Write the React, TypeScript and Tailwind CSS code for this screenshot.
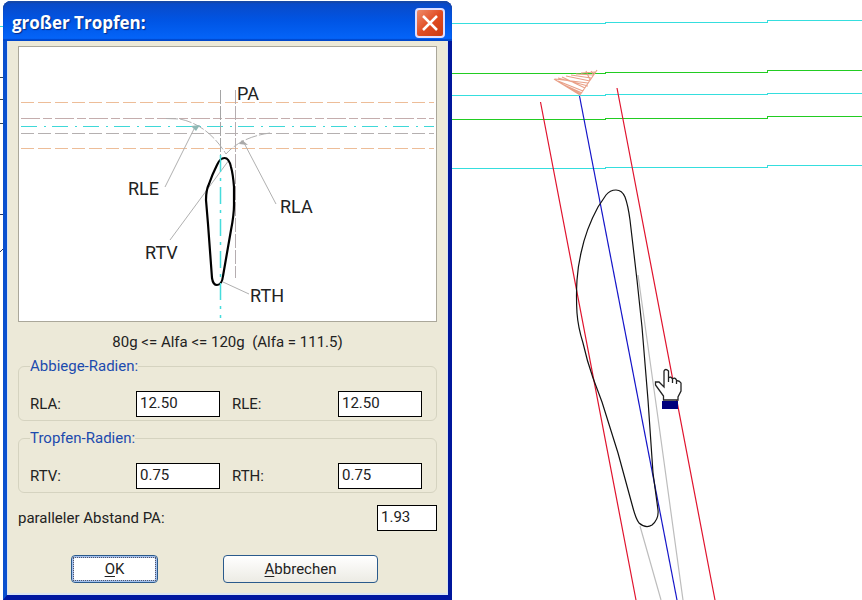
import { useState } from 'react';

function Field({ id, label, initial, className }: { id: string; label: string; initial: string; className: string }) {
  const [value, setValue] = useState(initial);
  return (
    <>
      <label htmlFor={id} className="whitespace-nowrap">
        {label}
      </label>
      <input
        id={id}
        value={value}
        onChange={(e) => setValue(e.target.value)}
        className={`h-[26px] border border-black bg-white pl-[3px] pb-0.5 text-[15px] leading-5 text-[#222] outline-none ${className}`}
      />
    </>
  );
}

function Group({ title, children }: { title: string; children: React.ReactNode }) {
  return (
    <fieldset className="rounded-md border border-[#d5d3c0] pb-[3px] pl-[11px]">
      <legend className="text-[15px] leading-5 text-[#1c4bae]">{title}</legend>
      <div className="grid grid-cols-[106px_84px_118px_84px] items-center pt-[15px] [&>label:nth-of-type(2)]:pl-3">
        {children}
      </div>
    </fieldset>
  );
}

// Sketch of the traffic island with its radii
function Sketch() {
  return (
    <svg viewBox="19 47 417 274" className="block w-full" role="img" aria-label="Tropfen">
      <g fill="none" shapeRendering="crispEdges">
        <g stroke="#edbd98" strokeDasharray="13 4">
          <path d="M21 102.5H434M21 148.5H434" />
        </g>
        <path d="M21 118.5H434" stroke="#c4adad" strokeDasharray="19 3 9 3" />
        <path d="M21 133.5H434" stroke="#b5b0b0" strokeDasharray="13 4" />
        <path d="M21 126.5H434" stroke="#3fd8d8" strokeDasharray="16 7 2 6" />
        <path d="M220.5 90V155" stroke="#a5a5a5" strokeDasharray="14 2" />
        <path d="M235.5 90V278" stroke="#b5adb0" strokeDasharray="14 2" />
      </g>
      <g fill="none" stroke="#b0b0b0">
        <path d="M166 118.5L180 119Q208 125 226 154Q241 137 270 133" strokeDasharray="12 2" />
        <path d="M165 187L195 127M276 204L243 141M170 240L229 160M249 294L223 282" />
      </g>
      <path d="M191 126l9-1-4 6z" fill="#8fb8b4" />
      <path d="M239 144l3-4 6 5z" fill="#aaa" />
      <path
        d="M224.5 158Q220 158 217 165Q212 175 209 184Q206 190 206 200L208 224L212 278Q213 285 217 285Q222 285 223 276L231 230Q234 215 234 205V187Q233 174 231 167Q229 158 224.5 158Z"
        fill="none"
        stroke="#000"
        strokeWidth="2.2"
      />
      <path d="M220.5 155V318" stroke="#45dcdc" strokeWidth="1.5" strokeDasharray="17 6 3 6" />
      <g fill="#222" className="font-['Roboto',sans-serif] text-[18px]">
        <text x="237" y="100">PA</text>
        <text x="128" y="195">RLE</text>
        <text x="280" y="213">RLA</text>
        <text x="145" y="259">RTV</text>
        <text x="250" y="302">RTH</text>
      </g>
    </svg>
  );
}

function Drawing() {
  return (
    <svg
      viewBox="0 0 862 600"
      preserveAspectRatio="xMinYMin slice"
      className="absolute inset-0 h-full w-full"
      aria-hidden="true"
    >
      <g fill="none" shapeRendering="crispEdges">
        <g stroke="#35dede">
          <path d="M0 26.5H10M440 23.5H605V22.5H767V20.5H862" />
          <path d="M440 95.5H605V94.5H767V93.5H862" />
          <path d="M440 168.5H605V167.5H767V165.5H862" />
        </g>
        <g stroke="#22cc22">
          <path d="M440 73.5H605V72.5H767V70.5H862" />
          <path d="M440 119.5H605V118.5H767V116.5H862" />
        </g>
        <path d="M0 77.5H6M0 99.5H6M0 123.5H6" stroke="#345" />
        <path d="M0 214.5H4M0 252L6 246" stroke="#236" />
      </g>
      <g fill="none" strokeWidth="1.2">
        <path d="M638 275L658 418L683 600M640 526L661 600" stroke="#bdbdbd" />
        <path d="M540.5 102L636 600M617 88L715 600" stroke="#e0142e" />
        <path d="M579.5 96L677 600" stroke="#1414c8" />
        <path
          d="M616 190Q622 190 625 197Q628 205 630 220L637 280L642 327L648 400L653 473L658 510Q659 519 652 525Q646 529 639 523Q636 519 633 508L618 453L602 402L593 378Q587 361 583 343Q578 327 577 313Q576 296 577 280Q578 266 581 253Q586 229 598 207L606 195Q610 190 616 190Z"
          stroke="#111"
        />
        <path
          d="M554 79L580 95L597 70M558 78L588 86M562 77L585 88M566 76L590 81M571 75L591 78M576 74L593 75M581 73L595 72M558 81L583 91M562 84L582 93M567 87L581 94M555 79L588 83M586 71L590 80M591 71L594 75"
          stroke="#e9a088"
        />
      </g>
      <path
        d="M663.5 400V396L655.5 385V382H659L664 387V371Q665.5 368 668.5 371V382V378Q671 376 672.5 379V383V379Q675 377 676.5 380V384V381Q679 380 681 383V391L678 397V400Z"
        fill="#fff"
        stroke="#222"
        strokeWidth="1.3"
      />
      <path d="M662 401H678V409H662Z" fill="#00007c" />
    </svg>
  );
}

export default function App() {
  return (
    <main className="relative min-h-screen overflow-hidden bg-white font-['Roboto',sans-serif] text-[15px] leading-5 text-[#222]">
      <Drawing />
      <section
        role="dialog"
        aria-labelledby="dialog-title"
        className="absolute left-[3px] top-px flex w-[449px] flex-col rounded-t-lg border-b-[5px] border-l-4 border-r-4 border-b-[#0017a0] border-l-[#0a50cf] border-r-[#00179c] bg-[#ece9d8]"
      >
        <header className="-mx-1 flex h-10 items-center justify-between rounded-t-lg bg-linear-to-b from-[#0a48c4] via-[#0055e5] to-[#0566fb] pl-[9px] pr-[7px] pt-1 shadow-[inset_0_2px_1px_#1648a8,inset_0_-2px_1px_#0048cc]">
          <h1
            id="dialog-title"
            className="font-['Open_Sans',sans-serif] text-[17px] font-bold text-white [text-shadow:1px_1px_1px_#0a2a80]"
          >
            großer Tropfen:
          </h1>
          <button
            aria-label="Schließen"
            className="flex h-[30px] w-[30px] items-center justify-center rounded-[4px] border-2 border-[#dfdfff] bg-linear-to-br from-[#ee8a68] via-[#e14c22] to-[#c93a10]"
          >
            <svg viewBox="0 0 16 16" className="h-4 w-4" stroke="#fff" strokeWidth="2.5">
              <path d="M1 1L15 15M15 1L1 15" />
            </svg>
          </button>
        </header>

        <div className="border-x border-b-2 border-[#d8e4f4] px-[10px] pb-[10px] pt-[5px]">
          <div className="border border-[#aaa79a] bg-white">
            <Sketch />
          </div>
          <p className="py-[10px] pb-1 text-center">80g &lt;= Alfa &lt;= 120g&nbsp; (Alfa = 111.5)</p>
          <div className="flex flex-col gap-[7px]">
            <Group title="Abbiege-Radien:">
              <Field id="rla" label="RLA:" initial="12.50" className="w-full" />
              <Field id="rle" label="RLE:" initial="12.50" className="w-full" />
            </Group>
            <Group title="Tropfen-Radien:">
              <Field id="rtv" label="RTV:" initial="0.75" className="w-full" />
              <Field id="rth" label="RTH:" initial="0.75" className="w-full" />
            </Group>
          </div>
          <div className="mt-3 flex items-center justify-between">
            <Field id="pa" label="paralleler Abstand PA:" initial="1.93" className="w-[60px]" />
          </div>
          <div className="mt-6 flex gap-[65px] pl-[53px]">
            <button className="h-7 w-[87px] rounded-[4px] border border-[#2a5a8c] bg-white p-px shadow-[inset_0_0_0_2px_#a5c1ee]">
              <span className="flex h-full items-center justify-center border border-dotted border-[#556]">
                <span>
                  <u className="underline-offset-2">O</u>K
                </span>
              </span>
            </button>
            <button className="h-7 w-[155px] rounded-[4px] border border-[#2a5a8c] bg-linear-to-b from-white to-[#ecebe4]">
              <u className="underline-offset-2">A</u>bbrechen
            </button>
          </div>
        </div>
      </section>
    </main>
  );
}
